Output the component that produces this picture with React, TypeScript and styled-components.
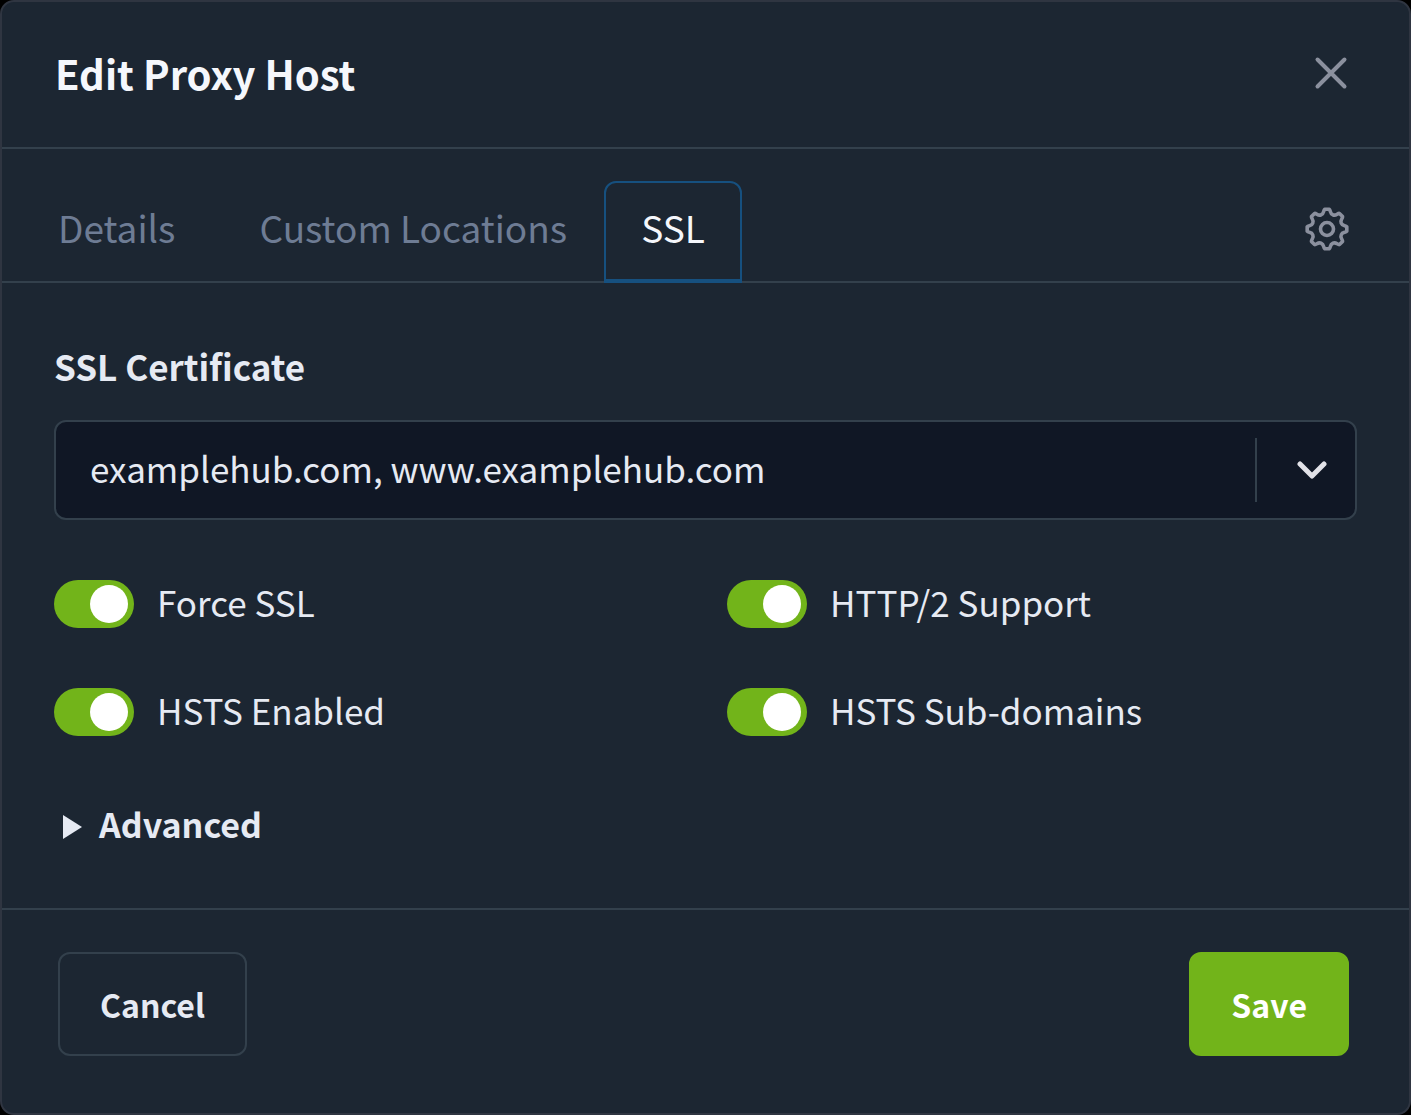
import React, { useState } from "react";
import styled, { createGlobalStyle } from "styled-components";

const color = {
  surface: "#1c2632",
  field: "#101725",
  line: "#33404c",
  frame: "#2f3541",
  text: "#e6eaf3",
  heading: "#f5f7fc",
  muted: "#6e7c94",
  icon: "#8b909e",
  accent: "#16507f",
  green: "#72b41a",
};

const GlobalStyle = createGlobalStyle`
  *, *::before, *::after { box-sizing: border-box; }
  body { margin: 0; background: #000; }
  body, button, select, input {
    font-family: "Noto Sans CJK SC", "Noto Sans", sans-serif;
  }
`;

const Dialog = styled.form`
  display: flex;
  flex-direction: column;
  min-height: 100vh;
  border: 2px solid ${color.frame};
  border-radius: 14px;
  background: ${color.surface};
  color: ${color.text};
`;

const Header = styled.header`
  display: flex;
  align-items: center;
  justify-content: space-between;
  height: 147px;
  padding: 0 61px 4px 53px;
  border-bottom: 2px solid ${color.line};
`;

const Title = styled.h1`
  margin: 0;
  color: ${color.heading};
  font-size: 40px;
  line-height: 60px;
  font-weight: 700;
`;

const IconButton = styled.button`
  display: flex;
  padding: 0;
  border: 0;
  background: none;
  color: ${color.icon};
  cursor: pointer;
`;

const TabBar = styled.div`
  display: flex;
  align-items: flex-start;
  justify-content: space-between;
  padding: 32px 60px 0 19px;
  border-bottom: 2px solid ${color.line};
`;

const TabList = styled.div`
  display: flex;
  margin-bottom: -2px;
`;

const Tab = styled.button<{ $active: boolean }>`
  height: 102px;
  padding: 0 35px 8px;
  border: 2px solid ${(p) => (p.$active ? color.accent : "transparent")};
  border-bottom-width: 4px;
  border-radius: 12px 12px 0 0;
  background: none;
  color: ${(p) => (p.$active ? color.heading : color.muted)};
  font-size: 37px;
  line-height: 56px;
  cursor: pointer;

  &:first-child {
    margin-right: 10px;
  }
`;

const GearSlot = styled.div`
  display: flex;
  align-items: center;
  height: 96px;
`;

const Body = styled.main`
  display: flex;
  flex: 1;
  flex-direction: column;
  padding: 55px 52px 40px;
`;

const FieldLabel = styled.label`
  font-size: 35px;
  line-height: 56px;
  font-weight: 700;
`;

const SelectFrame = styled.div`
  display: grid;
  align-items: center;
  margin-top: 26px;
`;

const Select = styled.select`
  grid-area: 1 / 1;
  width: 100%;
  height: 100px;
  padding: 0 130px 5px 34px;
  border: 2px solid ${color.line};
  border-radius: 12px;
  appearance: none;
  background: ${color.field};
  color: ${color.text};
  font-size: 35px;
`;

const SelectIndicator = styled.span`
  display: flex;
  grid-area: 1 / 1;
  align-items: center;
  justify-content: center;
  justify-self: end;
  width: 102px;
  height: 64px;
  padding-left: 9px;
  border-left: 2px solid ${color.line};
  pointer-events: none;
`;

const SwitchGrid = styled.div`
  display: grid;
  grid-template-columns: 1fr 1fr;
  gap: 52px 43px;
  margin-top: 56px;
`;

const SwitchRow = styled.label`
  display: flex;
  align-items: center;
  gap: 23px;
  height: 56px;
  font-size: 35px;
  line-height: 56px;
  cursor: pointer;
`;

const RowText = styled.span`
  padding-bottom: 5px;
`;

const SwitchInput = styled.input`
  display: flex;
  align-items: center;
  width: 80px;
  height: 48px;
  margin: 0;
  padding: 0 6px;
  border-radius: 24px;
  appearance: none;
  background: #4a5563;
  cursor: pointer;

  &::before {
    content: "";
    width: 38px;
    height: 38px;
    border-radius: 50%;
    background: #fff;
  }

  &:checked {
    justify-content: flex-end;
    background: ${color.green};
  }
`;

const Advanced = styled.details`
  margin-top: 56px;
`;

const Summary = styled.summary`
  display: flex;
  align-items: center;
  gap: 16px;
  padding-left: 9px;
  font-size: 34px;
  line-height: 56px;
  font-weight: 700;
  list-style: none;
  cursor: pointer;
`;

const Footer = styled.footer`
  display: flex;
  justify-content: space-between;
  padding: 42px 60px 57px 56px;
  border-top: 2px solid ${color.line};
`;

const Button = styled.button<{ $primary?: boolean }>`
  height: 104px;
  padding: 0 40px;
  border: 2px solid ${(p) => (p.$primary ? color.green : color.line)};
  border-radius: 12px;
  background: ${(p) => (p.$primary ? color.green : "none")};
  color: ${(p) => (p.$primary ? "#fff" : color.text)};
  font-size: 32px;
  line-height: 56px;
  font-weight: 700;
  cursor: pointer;
`;

const CloseIcon = () => (
  <svg width="34" height="34" viewBox="0 0 34 34" fill="none" stroke="currentColor" strokeWidth="4" strokeLinecap="round" aria-hidden="true">
    <path d="M3.5 3.5l27 27M30.5 3.5l-27 27" />
  </svg>
);

const rotate = (x: number, y: number, degrees: number) => {
  const a = (degrees * Math.PI) / 180;
  const rx = 22 + x * Math.cos(a) - y * Math.sin(a);
  const ry = 22 + x * Math.sin(a) + y * Math.cos(a);
  return `${rx.toFixed(2)} ${ry.toFixed(2)}`;
};

// Eight flat-topped teeth joined by rounded valleys.
const gearPath =
  [0, 45, 90, 135, 180, 225, 270, 315]
    .map((deg, i) => {
      const p = (x: number, y: number) => rotate(x, y, deg);
      return (
        `${i === 0 ? "M" : "L"}${p(-2.2, -19.8)}L${p(2.2, -19.8)}` +
        `C${p(3.9, -18.6)} ${p(2.6, -15.4)} ${p(5.9, -14.2)}` +
        `C${rotate(-2.6, -15.4, deg + 45)} ${rotate(-3.9, -18.6, deg + 45)} ${rotate(-2.2, -19.8, deg + 45)}`
      );
    })
    .join("") + "Z";

const GearIcon = () => (
  <svg width="44" height="44" viewBox="0 0 44 44" fill="none" stroke="currentColor" strokeWidth="3.6" strokeLinejoin="round" aria-hidden="true">
    <path d={gearPath} />
    <circle cx="22" cy="22" r="6.5" />
  </svg>
);

const ChevronIcon = () => (
  <svg width="30" height="20" viewBox="0 0 30 20" fill="none" stroke="#e2e2e8" strokeWidth="5" strokeLinecap="round" strokeLinejoin="round" aria-hidden="true">
    <path d="M3 4l12 12L27 4" />
  </svg>
);

const TriangleIcon = () => (
  <svg width="20" height="24" viewBox="0 0 20 24" fill="currentColor" aria-hidden="true">
    <path d="M0 0l19 12L0 24z" />
  </svg>
);

const tabs = ["Details", "Custom Locations", "SSL"];
const options = ["Force SSL", "HTTP/2 Support", "HSTS Enabled", "HSTS Sub-domains"];

export default function App() {
  const [active, setActive] = useState("SSL");

  return (
    <>
      <GlobalStyle />
      <Dialog role="dialog" aria-labelledby="dialog-title" onSubmit={(e) => e.preventDefault()}>
        <Header>
          <Title id="dialog-title">Edit Proxy Host</Title>
          <IconButton type="button" aria-label="Close">
            <CloseIcon />
          </IconButton>
        </Header>
        <TabBar>
          <TabList role="tablist">
            {tabs.map((name) => (
              <Tab
                key={name}
                type="button"
                role="tab"
                aria-selected={active === name}
                $active={active === name}
                onClick={() => setActive(name)}
              >
                {name}
              </Tab>
            ))}
          </TabList>
          <GearSlot>
            <IconButton type="button" aria-label="Settings">
              <GearIcon />
            </IconButton>
          </GearSlot>
        </TabBar>
        <Body>
          <FieldLabel htmlFor="certificate">SSL Certificate</FieldLabel>
          <SelectFrame>
            <Select id="certificate">
              <option>examplehub.com, www.examplehub.com</option>
            </Select>
            <SelectIndicator>
              <ChevronIcon />
            </SelectIndicator>
          </SelectFrame>
          <SwitchGrid>
            {options.map((name) => (
              <SwitchRow key={name}>
                <SwitchInput type="checkbox" role="switch" defaultChecked />
                <RowText>{name}</RowText>
              </SwitchRow>
            ))}
          </SwitchGrid>
          <Advanced>
            <Summary>
              <TriangleIcon />
              <RowText>Advanced</RowText>
            </Summary>
          </Advanced>
        </Body>
        <Footer>
          <Button type="button">Cancel</Button>
          <Button type="submit" $primary>
            Save
          </Button>
        </Footer>
      </Dialog>
    </>
  );
}
